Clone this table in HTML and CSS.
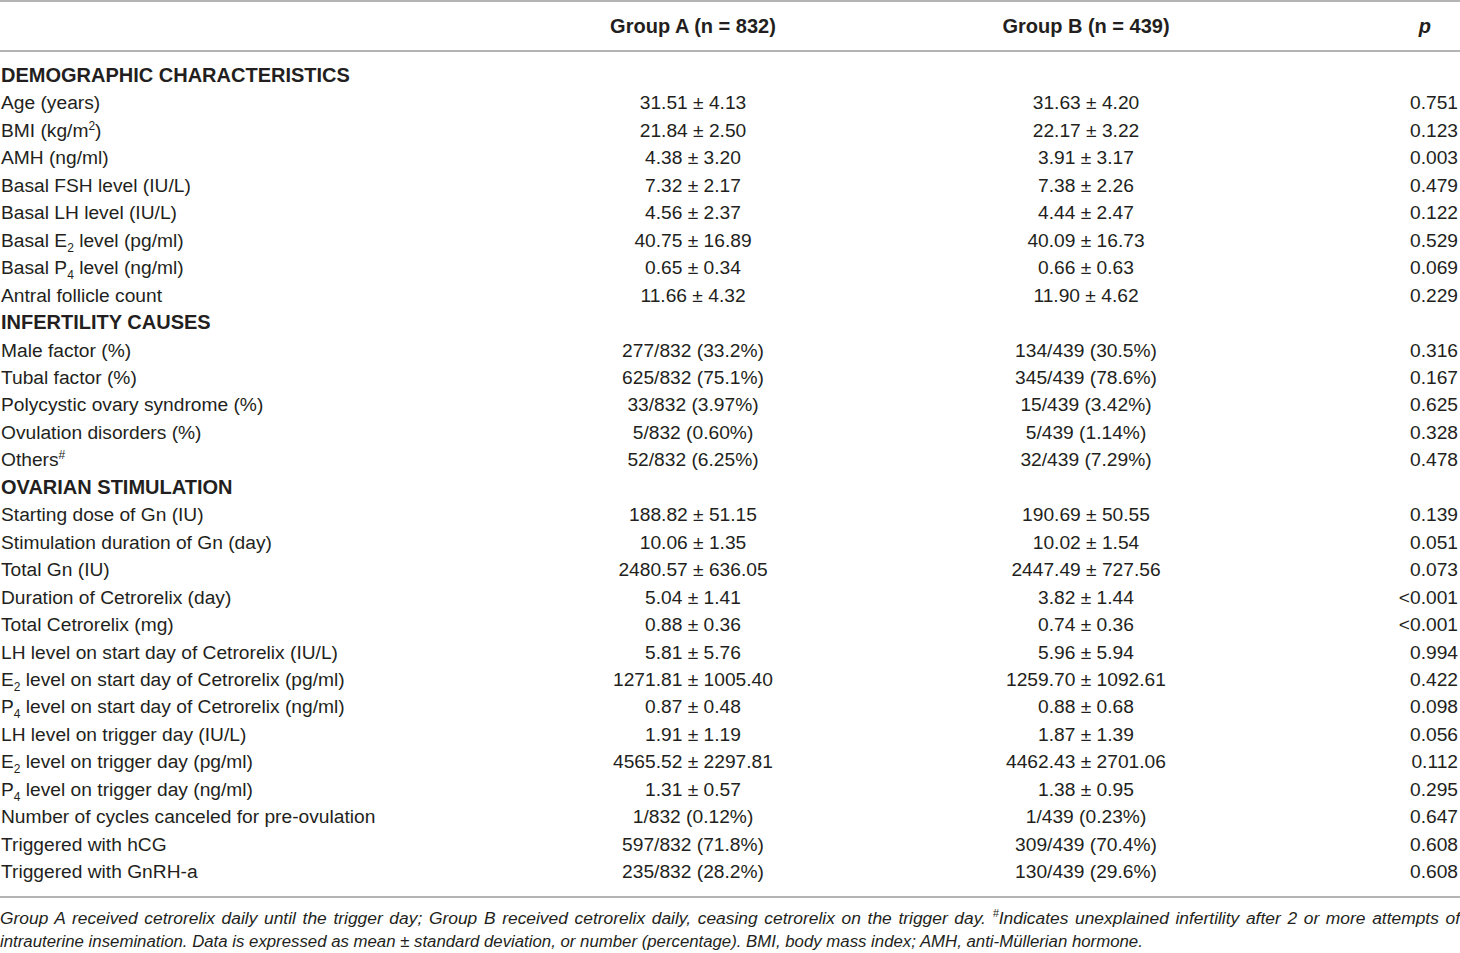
FILE: index.html
```html
<!DOCTYPE html>
<html>
<head>
<meta charset="utf-8">
<link rel="stylesheet" href="styles.css">
</head>
<body>
<div class="page">
<table class="data">
<colgroup><col class="c1"><col class="c2"><col class="c3"><col class="c4"></colgroup>
<thead>
<tr><th class="lbl"></th><th>Group A (n = 832)</th><th>Group B (n = 439)</th><th class="p"><i>p</i></th></tr>
</thead>
<tbody>
<tr class="sec first"><td colspan="4">DEMOGRAPHIC CHARACTERISTICS</td></tr>
<tr><td>Age (years)</td><td>31.51 ± 4.13</td><td>31.63 ± 4.20</td><td>0.751</td></tr>
<tr><td>BMI (kg/m<sup>2</sup>)</td><td>21.84 ± 2.50</td><td>22.17 ± 3.22</td><td>0.123</td></tr>
<tr><td>AMH (ng/ml)</td><td>4.38 ± 3.20</td><td>3.91 ± 3.17</td><td>0.003</td></tr>
<tr><td>Basal FSH level (IU/L)</td><td>7.32 ± 2.17</td><td>7.38 ± 2.26</td><td>0.479</td></tr>
<tr><td>Basal LH level (IU/L)</td><td>4.56 ± 2.37</td><td>4.44 ± 2.47</td><td>0.122</td></tr>
<tr><td>Basal E<sub>2</sub> level (pg/ml)</td><td>40.75 ± 16.89</td><td>40.09 ± 16.73</td><td>0.529</td></tr>
<tr><td>Basal P<sub>4</sub> level (ng/ml)</td><td>0.65 ± 0.34</td><td>0.66 ± 0.63</td><td>0.069</td></tr>
<tr><td>Antral follicle count</td><td>11.66 ± 4.32</td><td>11.90 ± 4.62</td><td>0.229</td></tr>
<tr class="sec"><td colspan="4">INFERTILITY CAUSES</td></tr>
<tr><td>Male factor (%)</td><td>277/832 (33.2%)</td><td>134/439 (30.5%)</td><td>0.316</td></tr>
<tr><td>Tubal factor (%)</td><td>625/832 (75.1%)</td><td>345/439 (78.6%)</td><td>0.167</td></tr>
<tr><td>Polycystic ovary syndrome (%)</td><td>33/832 (3.97%)</td><td>15/439 (3.42%)</td><td>0.625</td></tr>
<tr><td>Ovulation disorders (%)</td><td>5/832 (0.60%)</td><td>5/439 (1.14%)</td><td>0.328</td></tr>
<tr><td>Others<sup>#</sup></td><td>52/832 (6.25%)</td><td>32/439 (7.29%)</td><td>0.478</td></tr>
<tr class="sec"><td colspan="4">OVARIAN STIMULATION</td></tr>
<tr><td>Starting dose of Gn (IU)</td><td>188.82 ± 51.15</td><td>190.69 ± 50.55</td><td>0.139</td></tr>
<tr><td>Stimulation duration of Gn (day)</td><td>10.06 ± 1.35</td><td>10.02 ± 1.54</td><td>0.051</td></tr>
<tr><td>Total Gn (IU)</td><td>2480.57 ± 636.05</td><td>2447.49 ± 727.56</td><td>0.073</td></tr>
<tr><td>Duration of Cetrorelix (day)</td><td>5.04 ± 1.41</td><td>3.82 ± 1.44</td><td>&lt;0.001</td></tr>
<tr><td>Total Cetrorelix (mg)</td><td>0.88 ± 0.36</td><td>0.74 ± 0.36</td><td>&lt;0.001</td></tr>
<tr><td>LH level on start day of Cetrorelix (IU/L)</td><td>5.81 ± 5.76</td><td>5.96 ± 5.94</td><td>0.994</td></tr>
<tr><td>E<sub>2</sub> level on start day of Cetrorelix (pg/ml)</td><td>1271.81 ± 1005.40</td><td>1259.70 ± 1092.61</td><td>0.422</td></tr>
<tr><td>P<sub>4</sub> level on start day of Cetrorelix (ng/ml)</td><td>0.87 ± 0.48</td><td>0.88 ± 0.68</td><td>0.098</td></tr>
<tr><td>LH level on trigger day (IU/L)</td><td>1.91 ± 1.19</td><td>1.87 ± 1.39</td><td>0.056</td></tr>
<tr><td>E<sub>2</sub> level on trigger day (pg/ml)</td><td>4565.52 ± 2297.81</td><td>4462.43 ± 2701.06</td><td>0.112</td></tr>
<tr><td>P<sub>4</sub> level on trigger day (ng/ml)</td><td>1.31 ± 0.57</td><td>1.38 ± 0.95</td><td>0.295</td></tr>
<tr><td>Number of cycles canceled for pre-ovulation</td><td>1/832 (0.12%)</td><td>1/439 (0.23%)</td><td>0.647</td></tr>
<tr><td>Triggered with hCG</td><td>597/832 (71.8%)</td><td>309/439 (70.4%)</td><td>0.608</td></tr>
<tr class="last"><td>Triggered with GnRH-a</td><td>235/832 (28.2%)</td><td>130/439 (29.6%)</td><td>0.608</td></tr>
</tbody>
</table>
<div class="note">
<div class="note-line full">Group A received cetrorelix daily until the trigger day; Group B received cetrorelix daily, ceasing cetrorelix on the trigger day. <sup>#</sup>Indicates unexplained infertility after 2 or more attempts of</div>
<div class="note-line">intrauterine insemination. Data is expressed as mean ± standard deviation, or number (percentage). BMI, body mass index; AMH, anti-Müllerian hormone.</div>
</div>
</div>
</body>
</html>
```

FILE: styles.css
```css
html, body {
  margin: 0;
  padding: 0;
  background: #ffffff;
}

.page {
  width: 1460px;
  font-family: "Liberation Sans", Arial, sans-serif;
  color: #231f20;
}

.data {
  width: 1460px;
  border-collapse: collapse;
  table-layout: fixed;
  font-size: 19.2px;
}

.c1 { width: 500px; }
.c2 { width: 386px; }
.c3 { width: 400px; }
.c4 { width: 174px; }

.data thead tr {
  border-top: 2px solid #b4b4b4;
  border-bottom: 2px solid #b4b4b4;
}

.data th {
  height: 48px;
  padding: 0;
  font-size: 20px;
  font-weight: bold;
  text-align: center;
  vertical-align: middle;
}

.data th.p {
  text-align: right;
  padding-right: 29px;
}

.data td {
  padding: 0;
  height: 27.45px;
  line-height: 27.45px;
  text-align: center;
  white-space: nowrap;
}

.data td:first-child {
  text-align: left;
  padding-left: 1px;
}

.data td:last-child {
  text-align: right;
  padding-right: 2px;
}

.data tr.sec td {
  font-size: 20px;
  font-weight: bold;
  text-align: left;
}

.data tr.first td {
  padding-top: 10px;
}

.data tr.last {
  border-bottom: 2px solid #b4b4b4;
}

.data tr.last td {
  padding-bottom: 10px;
}

sub, sup {
  font-size: 12px;
  line-height: 0;
}

.note {
  padding-top: 8px;
  font-style: italic;
  font-size: 16.8px;
  line-height: 24px;
}

.note-line {
  white-space: nowrap;
}

.note-line.full {
  font-size: 17.4px;
  text-align: justify;
  text-align-last: justify;
  white-space: normal;
}

.note sup {
  font-size: 11px;
}
```
